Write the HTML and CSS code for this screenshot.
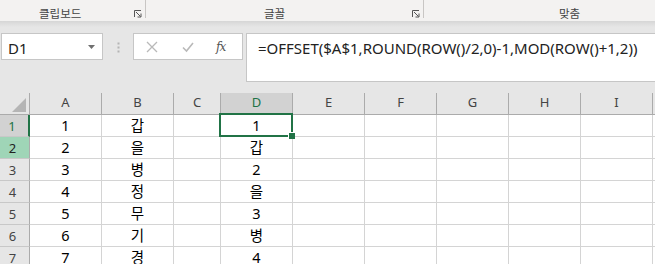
FILE: index.html
```html
<!DOCTYPE html>
<html lang="ko">
<head>
<meta charset="utf-8">
<title>Excel</title>
<link rel="stylesheet" href="styles.css">
</head>
<body>
<div class="ribbon">
  <div class="group g1">
    <span class="label">클립보드</span>
    <svg class="launcher" width="8" height="8" viewBox="0 0 8 8"><path d="M0.5 7V0.5H7" fill="none" stroke="#555" stroke-width="1"/><path d="M2 2L6.5 6.5M3.5 7H7V3.5" fill="none" stroke="#555" stroke-width="1"/></svg>
  </div>
  <div class="sep"></div>
  <div class="group g2">
    <span class="label">글꼴</span>
    <svg class="launcher" width="8" height="8" viewBox="0 0 8 8"><path d="M0.5 7V0.5H7" fill="none" stroke="#555" stroke-width="1"/><path d="M2 2L6.5 6.5M3.5 7H7V3.5" fill="none" stroke="#555" stroke-width="1"/></svg>
  </div>
  <div class="sep"></div>
  <div class="group g3">
    <span class="label">맞춤</span>
  </div>
</div>
<div class="shade"></div>
<div class="fbar">
  <div class="namebox">
    <span class="name">D1</span>
    <svg class="dd" width="7" height="4" viewBox="0 0 7 4"><path d="M0 0H7L3.5 4Z" fill="#6f6f6f"/></svg>
  </div>
  <svg class="dots" width="3" height="12" viewBox="0 0 3 12"><rect x="0.5" y="0.5" width="2" height="2" fill="#b4b4b4"/><rect x="0.5" y="4.5" width="2" height="2" fill="#b4b4b4"/><rect x="0.5" y="8.5" width="2" height="2" fill="#b4b4b4"/></svg>
  <div class="fxbox">
    <svg class="ico" width="12" height="12" viewBox="0 0 12 12"><path d="M1 1L11 11M11 1L1 11" stroke="#b9b9b9" stroke-width="1.3" fill="none"/></svg>
    <svg class="ico" width="12" height="12" viewBox="0 0 12 12"><path d="M1 6.5L4.5 10L11 2" stroke="#b9b9b9" stroke-width="1.6" fill="none"/></svg>
    <span class="fx">fx</span>
  </div>
  <div class="formula">=OFFSET($A$1,ROUND(ROW()/2,0)-1,MOD(ROW()+1,2))</div>
</div>
<div class="gap"></div>
<div class="sheet">
  <div class="corner"><svg width="14" height="14" viewBox="0 0 14 14"><path d="M14 0V14H0Z" fill="#b5b5b5"/></svg></div>
  <div class="ch">A</div><div class="ch">B</div><div class="ch">C</div><div class="ch active">D</div><div class="ch">E</div><div class="ch">F</div><div class="ch">G</div><div class="ch">H</div><div class="ch">I</div><div class="ch"></div>

  <div class="rh active">1</div><div class="c">1</div><div class="c">갑</div><div class="c"></div><div class="c">1</div><div class="c"></div><div class="c"></div><div class="c"></div><div class="c"></div><div class="c"></div><div class="c"></div>
  <div class="rh hover">2</div><div class="c">2</div><div class="c">을</div><div class="c"></div><div class="c">갑</div><div class="c"></div><div class="c"></div><div class="c"></div><div class="c"></div><div class="c"></div><div class="c"></div>
  <div class="rh">3</div><div class="c">3</div><div class="c">병</div><div class="c"></div><div class="c">2</div><div class="c"></div><div class="c"></div><div class="c"></div><div class="c"></div><div class="c"></div><div class="c"></div>
  <div class="rh">4</div><div class="c">4</div><div class="c">정</div><div class="c"></div><div class="c">을</div><div class="c"></div><div class="c"></div><div class="c"></div><div class="c"></div><div class="c"></div><div class="c"></div>
  <div class="rh">5</div><div class="c">5</div><div class="c">무</div><div class="c"></div><div class="c">3</div><div class="c"></div><div class="c"></div><div class="c"></div><div class="c"></div><div class="c"></div><div class="c"></div>
  <div class="rh">6</div><div class="c">6</div><div class="c">기</div><div class="c"></div><div class="c">병</div><div class="c"></div><div class="c"></div><div class="c"></div><div class="c"></div><div class="c"></div><div class="c"></div>
  <div class="rh">7</div><div class="c">7</div><div class="c">경</div><div class="c"></div><div class="c">4</div><div class="c"></div><div class="c"></div><div class="c"></div><div class="c"></div><div class="c"></div><div class="c"></div>

  <div class="sel"></div>
  <div class="handle"></div>
</div>
</body>
</html>
```
FILE: styles.css
```css
html, body {
  margin: 0;
  padding: 0;
}
body {
  width: 655px;
  height: 264px;
  overflow: hidden;
  background: #e6e6e6;
  font-family: "Noto Sans", "Noto Sans CJK KR", sans-serif;
  color: #000;
}
.ribbon {
  display: flex;
  height: 21px;
  background: #f3f2f1;
}
.group {
  display: flex;
  align-items: flex-start;
  height: 21px;
  box-sizing: border-box;
}
.g1 { width: 145px; padding-left: 39px; }
.g2 { width: 277px; padding-left: 118px; }
.g3 { flex: 1; padding-left: 135px; }
.label {
  font-family: "Noto Sans CJK KR", sans-serif;
  font-size: 11.5px;
  line-height: 14px;
  margin-top: 6px;
  color: #444;
}
.launcher {
  margin-left: auto;
  margin-right: 3px;
  margin-top: 10px;
}
.sep {
  width: 1px;
  height: 18px;
  background: #c8c6c4;
}
.shade {
  height: 12px;
  background: linear-gradient(#d6d6d6, #e6e6e6 6px);
}
.fbar {
  display: flex;
  align-items: flex-start;
  height: 49px;
}
.namebox {
  margin-left: 1px;
  width: 102px;
  height: 27px;
  box-sizing: border-box;
  background: #fff;
  border: 1px solid #c6c6c6;
  display: flex;
  align-items: center;
  padding: 0 7px 0 6px;
}
.name {
  font-size: 15px;
  line-height: 16px;
  padding-top: 2px;
  color: #222;
}
.dd { margin-left: auto; }
.dots {
  margin: 9px 13px 0 14px;
}
.fxbox {
  width: 110px;
  height: 27px;
  box-sizing: border-box;
  background: #fff;
  border: 1px solid #c6c6c6;
  display: flex;
  align-items: center;
  padding-left: 12px;
  gap: 24px;
}
.ico { flex: none; }
.fx {
  font-family: "DejaVu Serif", "Liberation Serif", serif;
  font-style: italic;
  font-size: 12px;
  color: #555;
  margin-left: -2px;
  letter-spacing: -1px;
}
.formula {
  margin-left: 3px;
  flex: 1;
  height: 49px;
  box-sizing: border-box;
  background: #fff;
  border: 1px solid #c6c6c6;
  border-right: none;
  padding: 4px 0 0 11px;
  font-size: 15px;
  line-height: 20px;
  color: #222;
  white-space: nowrap;
}
.gap { height: 11px; }
.sheet {
  position: relative;
  display: grid;
  grid-template-columns: 30px 72px 72px 47px repeat(7, 72px);
  grid-auto-rows: 22px;
  width: 729px;
}
.corner {
  background: #e6e6e6;
  border-right: 1px solid #ababab;
  border-bottom: 1px solid #ababab;
  box-sizing: border-box;
  display: flex;
  align-items: flex-end;
  justify-content: flex-end;
  padding: 0 3px 2px 0;
}
.corner svg { display: block; }
.ch {
  background: #e6e6e6;
  border-right: 1px solid #ababab;
  border-bottom: 1px solid #ababab;
  box-sizing: border-box;
  font-size: 13px;
  line-height: 18px;
  text-align: center;
  color: #444;
}
.ch.active {
  background: #d2d2d2;
  color: #217346;
  border-bottom: 2px solid #217346;
}
.rh {
  background: #e6e6e6;
  border-right: 1px solid #ababab;
  border-bottom: 1px solid #c8c8c8;
  box-sizing: border-box;
  font-size: 13px;
  line-height: 22px;
  text-align: center;
  padding-right: 4px;
  color: #444;
}
.rh.active {
  background: #d2d2d2;
  color: #217346;
  border-right: 2px solid #217346;
}
.rh.hover {
  background: #9fd5b7;
  color: #222;
}
.c {
  background: #fff;
  border-right: 1px solid #d4d4d4;
  border-bottom: 1px solid #d4d4d4;
  box-sizing: border-box;
  font-size: 14.5px;
  line-height: 21px;
  text-align: center;
}
.sel {
  position: absolute;
  left: 219px;
  top: 20px;
  width: 74px;
  height: 24px;
  box-sizing: border-box;
  border: 2px solid #217346;
}
.handle {
  position: absolute;
  left: 288px;
  top: 39px;
  width: 7px;
  height: 7px;
  box-sizing: border-box;
  background: #217346;
  border-left: 1px solid #fff;
  border-top: 1px solid #fff;
}
```
